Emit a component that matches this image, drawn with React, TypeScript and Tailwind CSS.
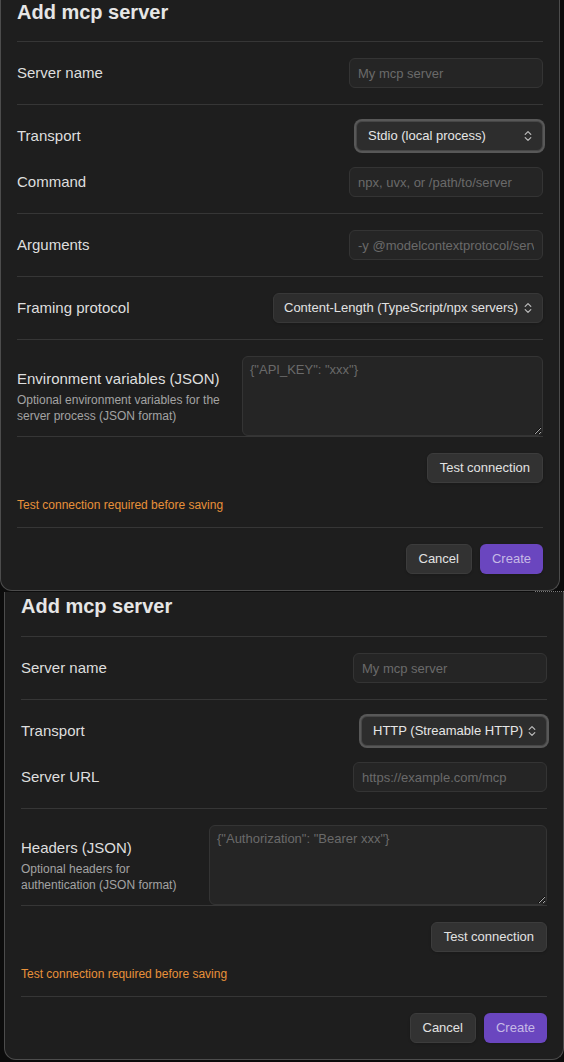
import React from "react";

function UpDown() {
  return (
    <svg width="8" height="12" viewBox="0 0 8 12" fill="none" className="shrink-0">
      <path d="M1.2 4.4L4 1.6L6.8 4.4M1.2 7.6L4 10.4L6.8 7.6" stroke="#bdbdbd" strokeWidth="1.2" strokeLinecap="round" strokeLinejoin="round" />
    </svg>
  );
}

function TextInput({ placeholder }: { placeholder: string }) {
  return (
    <input
      placeholder={placeholder}
      className="h-[30px] w-[194px] rounded-md border border-[#343434] bg-[#252525] px-2 text-[13px] text-[#dddddd] outline-none placeholder:text-[#6a6a6a]"
    />
  );
}

// select that currently has keyboard focus (thick grey ring)
function FocusedSelect({ value, width }: { value: string; width: string }) {
  return (
    <div className={`flex h-[30px] ${width} items-center justify-between rounded-md border border-[#474747] bg-[#2d2d2d] pl-[11px] pr-2.5 text-[13px] text-[#e6e6e6] ring-2 ring-[#585858]`}>
      <span>{value}</span>
      <UpDown />
    </div>
  );
}

function Label({ children }: { children: React.ReactNode }) {
  return <span className="pt-px text-[15px] text-[#dedede]">{children}</span>;
}

function Row({ label, children }: { label: string; children: React.ReactNode }) {
  return (
    <div className="flex items-center justify-between border-b border-[#363636] py-4">
      <Label>{label}</Label>
      {children}
    </div>
  );
}

function JsonRow({ label, hint, placeholder, width }: { label: string; hint: string; placeholder: string; width: string }) {
  return (
    <div className="flex items-center border-b border-[#363636] pt-4">
      <div className="flex-1 pr-4">
        <div className="text-[15px] leading-5 text-[#dedede]">{label}</div>
        <div className="mt-[3px] text-xs leading-4 text-[#a3a3a3]">{hint}</div>
      </div>
      <textarea
        placeholder={placeholder}
        className={`block h-20 ${width} rounded-md border border-[#343434] bg-[#252525] px-[7px] py-[5px] text-[13px] leading-4 text-[#dddddd] outline-none placeholder:text-[#6a6a6a]`}
      />
    </div>
  );
}

function Footer() {
  return (
    <>
      <div className="border-b border-[#363636] pb-[14px] pt-4">
        <div className="flex justify-end">
          <button className="h-[30px] rounded-md border border-[#3c3c3c] bg-[#323232] px-3 text-[13px] text-[#e2e2e2] shadow-sm">Test connection</button>
        </div>
        <p className="mt-[14px] text-xs leading-4 text-[#e8913a]">Test connection required before saving</p>
      </div>
      <div className="flex justify-end gap-2 py-4">
        <button className="h-[30px] rounded-md border border-[#3c3c3c] bg-[#323232] px-3 text-[13px] text-[#e2e2e2] shadow-sm">Cancel</button>
        <button className="h-[30px] rounded-md bg-[#6a46bf] px-3 text-[13px] text-[#c6bae6] shadow-sm">Create</button>
      </div>
    </>
  );
}

function StdioDialog() {
  return (
    <div className="w-[560px] rounded-b-xl border-x border-b border-[#4c4c4c] bg-[#1e1e1e] px-4">
      <h2 className="border-b border-[#363636] pb-[17px] text-xl font-bold leading-6 text-[#e6e6e6]">Add mcp server</h2>
      <Row label="Server name">
        <TextInput placeholder="My mcp server" />
      </Row>
      <div className="flex flex-col gap-4 border-b border-[#363636] py-4">
        <div className="flex items-center justify-between">
          <Label>Transport</Label>
          <FocusedSelect value="Stdio (local process)" width="w-[187px]" />
        </div>
        <div className="flex items-center justify-between">
          <Label>Command</Label>
          <TextInput placeholder="npx, uvx, or /path/to/server" />
        </div>
      </div>
      <Row label="Arguments">
        <TextInput placeholder="-y @modelcontextprotocol/server-filesystem" />
      </Row>
      <Row label="Framing protocol">
        <div className="flex h-[30px] w-[270px] items-center justify-between rounded-md border border-[#383838] bg-[#2d2d2d] pl-[10px] pr-2.5 text-[13px] text-[#e2e2e2] shadow-sm">
          <span>Content-Length (TypeScript/npx servers)</span>
          <UpDown />
        </div>
      </Row>
      <JsonRow
        label="Environment variables (JSON)"
        hint="Optional environment variables for the server process (JSON format)"
        placeholder={'{"API_KEY": "xxx"}'}
        width="w-[301px]"
      />
      <Footer />
    </div>
  );
}

function HttpDialog() {
  return (
    <div className="ml-1 w-[560px] rounded-b-xl border-x border-b border-[#4c4c4c] bg-[#1e1e1e] px-4 pt-0.5">
      <h2 className="border-b border-[#363636] pb-[18px] text-xl font-bold leading-6 text-[#e6e6e6]">Add mcp server</h2>
      <Row label="Server name">
        <TextInput placeholder="My mcp server" />
      </Row>
      <div className="flex flex-col gap-4 border-b border-[#363636] py-4">
        <div className="flex items-center justify-between">
          <Label>Transport</Label>
          <FocusedSelect value="HTTP (Streamable HTTP)" width="w-[186px]" />
        </div>
        <div className="flex items-center justify-between">
          <Label>Server URL</Label>
          <TextInput placeholder="https://example.com/mcp" />
        </div>
      </div>
      <JsonRow
        label="Headers (JSON)"
        hint="Optional headers for authentication (JSON format)"
        placeholder={'{"Authorization": "Bearer xxx"}'}
        width="w-[338px]"
      />
      <Footer />
    </div>
  );
}

export default function App() {
  return (
    <div className="h-[1062px] w-[564px] overflow-hidden bg-[#0c0c0c] font-['Liberation_Sans',Arial,sans-serif]">
      <StdioDialog />
      <div className="flex h-px justify-end">
        <div className="w-[29px] border-t border-dotted border-[#7a7a7a]" />
      </div>
      <HttpDialog />
    </div>
  );
}
